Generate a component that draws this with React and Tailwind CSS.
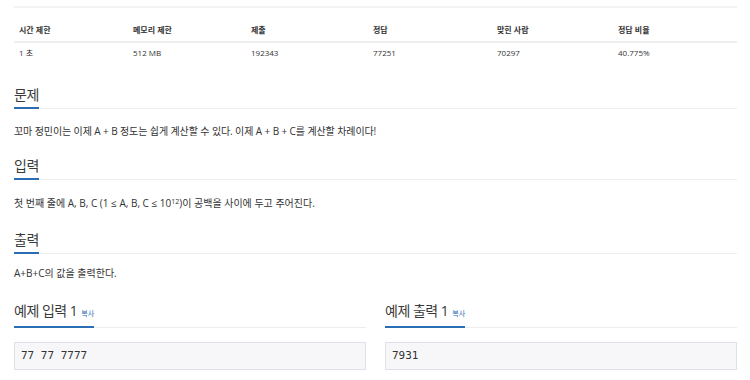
export default function App() {
  const font = { fontFamily: '"Open Sans", "Noto Sans CJK KR", sans-serif' };
  const cols = ["시간 제한", "메모리 제한", "제출", "정답", "맞힌 사람", "정답 비율"];
  const vals = ["1 초", "512 MB", "192343", "77251", "70297", "40.775%"];
  const Heading = ({ children, extra }) => (
    <div className="border-b border-[#eeeeee] leading-none">
      <h2 className="-mb-px flex w-fit items-baseline border-b-2 border-[#2a6db5] pb-[2px] text-[14px] leading-[20px] tracking-[-0.5px] text-[#3a3a3a]">
        <span>{children}</span>
        {extra}
      </h2>
    </div>
  );
  const Copy = () => (
    <span className="ml-[4px] text-[7px] tracking-normal text-[#2a6db5]">복사</span>
  );
  return (
    <div className="w-[750px] h-[380px] overflow-hidden bg-white pl-[14px] pr-[13px] pt-[6px] text-[#333]" style={font}>
      <div className="h-[2px] bg-[#f3f3f3]" />
      <div className="mt-[11px] grid grid-cols-[114px_118px_122px_124px_121px_1fr] text-[8px]">
        {cols.map((c) => (
          <div key={c} className="flex h-[24px] items-center border-b-2 border-[#eeeeee] pl-[5px] font-bold">
            {c}
          </div>
        ))}
        {vals.map((v) => (
          <div key={v} className="flex h-[20px] items-center pl-[5px]">
            {v}
          </div>
        ))}
      </div>

      <div className="mt-[22px]">
        <Heading>문제</Heading>
        <p className="mt-[15px] text-[10px] leading-[15px] tracking-[-0.1px]">
          꼬마 정민이는 이제 A + B 정도는 쉽게 계산할 수 있다. 이제 A + B + C를 계산할 차례이다!
        </p>
      </div>

      <div className="mt-[17px]">
        <Heading>입력</Heading>
        <p className="mt-[16px] text-[10px] leading-[15px]">
          첫 번째 줄에 A, B, C (1 ≤ A, B, C ≤ 10<sup className="text-[7px] leading-none">12</sup>)이 공백을 사이에 두고 주어진다.
        </p>
      </div>

      <div className="mt-[19px]">
        <Heading>출력</Heading>
        <p className="mt-[12px] text-[10px] leading-[15px]">A+B+C의 값을 출력한다.</p>
      </div>

      <div className="mt-[20px] grid grid-cols-2 gap-x-[19px]">
        <div>
          <Heading extra={<Copy />}>예제 입력 1</Heading>
          <pre className="mt-[14px] h-[28px] border border-[#e1e1e8] bg-[#f7f7f9] px-[6px] text-[11px] leading-[26px] text-[#333]" style={{ fontFamily: '"DejaVu Sans Mono", monospace' }}>77 77 7777</pre>
        </div>
        <div>
          <Heading extra={<Copy />}>예제 출력 1</Heading>
          <pre className="mt-[14px] h-[28px] border border-[#e1e1e8] bg-[#f7f7f9] px-[6px] text-[11px] leading-[26px] text-[#333]" style={{ fontFamily: '"DejaVu Sans Mono", monospace' }}>7931</pre>
        </div>
      </div>
    </div>
  );
}
